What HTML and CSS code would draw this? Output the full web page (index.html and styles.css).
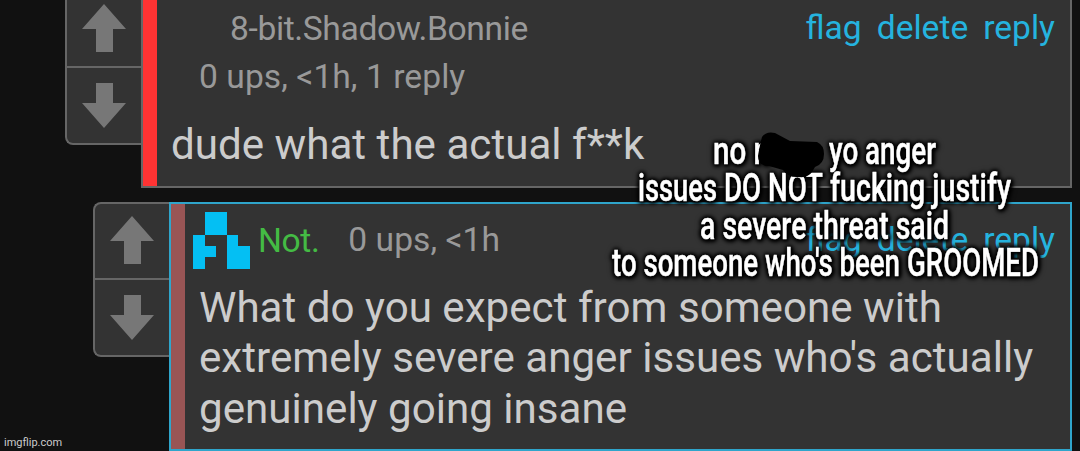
FILE: index.html
```html
<!DOCTYPE html>
<html lang="en">
<head>
    <meta charset="UTF-8">
    <meta name="viewport" content="width=device-width, initial-scale=1.0">
    <title>Comments</title>
    <link rel="stylesheet" href="styles.css">
</head>
<body>
    <div class="comment first">
        <div class="votes">
            <div class="vote"><svg width="44" height="48"><path d="M22 0L44 25H31V48H14V25H0Z"/></svg></div>
            <div class="vote"><svg width="44" height="46"><path d="M22 45L44 20H31V0H14V20H0Z"/></svg></div>
        </div>
        <div class="card">
            <div class="row">
                <span class="user">8-bit.Shadow.Bonnie</span>
                <div class="links"><a>flag</a><a>delete</a><a>reply</a></div>
            </div>
            <div class="row stats">0 ups, &lt;1h, 1 reply</div>
            <p class="text">dude what the actual f**k</p>
        </div>
    </div>

    <div class="comment second">
        <div class="votes">
            <div class="vote"><svg width="44" height="48"><path d="M22 0L44 25H31V48H14V25H0Z"/></svg></div>
            <div class="vote"><svg width="44" height="46"><path d="M22 45L44 20H31V0H14V20H0Z"/></svg></div>
        </div>
        <div class="card">
            <div class="row">
                <svg class="avatar" width="57" height="57"><path d="M12 0H34V23H12ZM0 23H12V34H23V45H12V57H0ZM34 23H45V34H57V57H34Z"/></svg>
                <span class="user green">Not.</span>
                <span class="ups">0 ups, &lt;1h</span>
                <div class="links"><a>flag</a><a>delete</a><a>reply</a></div>
            </div>
            <p class="text">What do you expect from someone with<br>extremely severe anger issues who's actually<br>genuinely going insane</p>
        </div>
    </div>

    <svg class="caption" width="1080" height="451">
        <g class="caption-text">
            <text x="713" y="164" textLength="57" lengthAdjust="spacingAndGlyphs">no n</text>
            <text x="829" y="164" textLength="107" lengthAdjust="spacingAndGlyphs">yo anger</text>
            <text x="638" y="201" textLength="79" lengthAdjust="spacingAndGlyphs">issues</text>
            <text x="724" y="201" textLength="99" lengthAdjust="spacingAndGlyphs">DO NOT</text>
            <text x="830" y="201" textLength="181" lengthAdjust="spacingAndGlyphs">fucking justify</text>
            <text x="700" y="239" textLength="249" lengthAdjust="spacingAndGlyphs">a severe threat said</text>
            <text x="612" y="276" textLength="288" lengthAdjust="spacingAndGlyphs">to someone who's been</text>
            <text x="907" y="276" textLength="132" lengthAdjust="spacingAndGlyphs">GROOMED</text>
        </g>
        <path d="M762 137Q766 131 775 133L790 141L817 142Q824 145 824 154Q824 164 815 167L812 172Q808 178 799 177Q788 178 783 170L769 166Q758 166 758 156Q760 144 762 137Z"/>
    </svg>
    <span class="watermark">imgflip.com</span>
</body>
</html>
```

FILE: styles.css
```css
* {
    box-sizing: border-box;
}
body {
    margin: 0;
    height: 451px;
    overflow: hidden;
    background: #111;
    color: #999;
    font-family: Roboto, sans-serif;
    font-size: 33.6px;
    position: relative;
}
.comment {
    display: flex;
    align-items: flex-start;
    margin-right: 8px;
}
.first {
    padding-left: 65px;
    height: 202px;
}
.second {
    padding-left: 93px;
    height: 249px;
}
.votes {
    width: 76px;
    height: 155px;
    border: 2px solid #666;
    border-right: 0;
    border-radius: 8px 0 0 8px;
    background: #333;
}
.first .votes {
    height: 145px;
    border-top: 0;
    border-radius: 0 0 0 8px;
}
.vote {
    height: 76px;
    padding: 12px 0 0 15px;
}
.first .vote:first-child {
    height: 68px;
    padding-top: 4px;
}
.vote:first-child {
    border-bottom: 2px solid #666;
}
.vote + .vote {
    padding-top: 15px;
}
.vote svg {
    display: block;
    fill: #777;
}
.card {
    flex: 1;
    background: #333;
    border: 2px solid #666;
}
.first .card {
    height: 188px;
    border-top: 0;
    padding: 5px 15px 0 14px;
    box-shadow: inset 14px 0 #f33;
}
.second .card {
    height: 249px;
    border-color: #2fa5cb;
    padding: 8px 15px 0 14px;
    box-shadow: inset 14px 0 #955;
}
.row {
    display: flex;
    height: 48px;
    line-height: 48px;
    white-space: nowrap;
}
.first .user {
    margin-left: 73px;
    letter-spacing: -0.37px;
}
.stats {
    margin-left: 42px;
    letter-spacing: 0.06px;
}
.links {
    display: flex;
    gap: 15px;
    margin: -1px 0 0 auto;
    color: #25b3df;
}
.first .text {
    margin: 19px 0 0 14px;
}
.second .row {
    height: 57px;
    line-height: 57px;
}
.avatar {
    margin-left: 8px;
    fill: #04bff3;
}
.green {
    color: #4b4;
    margin-left: 8px;
    letter-spacing: -0.4px;
}
.ups {
    margin: -1px 0 0 29px;
    letter-spacing: 0.04px;
}
.text {
    margin: 14px 0 0 14px;
    font-size: 42.15px;
    line-height: 50.4px;
    white-space: nowrap;
    color: #ccc;
}
.caption {
    position: absolute;
    left: 0;
    top: 0;
}
.caption-text {
    fill: #fff;
    stroke: #fff;
    stroke-width: 0.5px;
    font-size: 39px;
    font-weight: 500;
    filter: drop-shadow(0 0 2px #000) drop-shadow(0 0 2px #000) drop-shadow(1px 1px 1px #000);
}
.watermark {
    position: absolute;
    left: 4px;
    bottom: 1px;
    font-size: 11px;
    line-height: 14px;
    color: #ccc;
}
```
